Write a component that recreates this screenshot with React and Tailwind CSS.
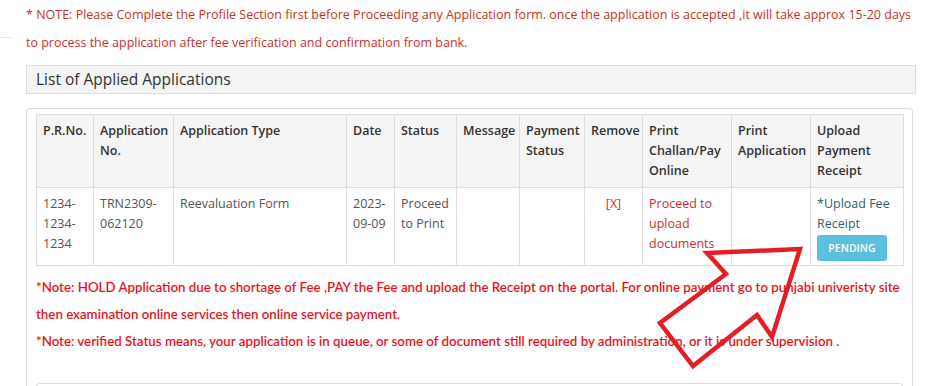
import React from "react";

const cols = [57, 80, 173, 48, 62, 63, 65, 58, 89, 79, 93];

export default function App() {
  const th = "border border-[#dddddd] px-[6px] py-[6px] align-top text-left font-semibold text-[#333333]";
  const td = "border border-[#dddddd] px-[6px] py-[6px] align-top text-left text-[#555555]";
  return (
    <div className="relative w-[926px] h-[386px] overflow-hidden bg-white" style={{ fontFamily: '"Open Sans", "Liberation Sans", sans-serif' }}>
      <div className="flex">
        <div className="w-[26px] shrink-0">
          <div className="mt-[37px] h-px w-[12px] bg-[#e8e8e8]" />
        </div>
        <div className="w-[890px] shrink-0">
          <p className="pt-[1px] text-[12.5px] leading-[28px] text-[#c9302c]">
            * NOTE: Please Complete the Profile Section first before Proceeding any Application form. once the application is accepted ,it will take approx 15-20 days to process the application after fee verification and confirmation from bank.
          </p>
          <div className="mt-[8px] h-[29px] border border-[#dddddd] bg-[#f5f5f5] pl-[9px] text-[15.5px] leading-[27px] text-[#333333]">
            List of Applied Applications
          </div>
          <div className="mt-[14px] w-[887px] rounded-t-[4px] border border-b-0 border-[#dddddd] pl-[9px] pt-[5px]">
            <table className="table-fixed border-collapse text-[12.5px] leading-[20px] w-[867px]">
              <colgroup>
                {cols.map((w, i) => (
                  <col key={i} style={{ width: w }} />
                ))}
              </colgroup>
              <thead>
                <tr className="bg-[#f5f5f5]">
                  <th className={th}>P.R.No.</th>
                  <th className={th}>Application No.</th>
                  <th className={th}>Application Type</th>
                  <th className={th}>Date</th>
                  <th className={th}>Status</th>
                  <th className={th}>Message</th>
                  <th className={th}>Payment Status</th>
                  <th className={th}>Remove</th>
                  <th className={th}>Print Challan/Pay Online</th>
                  <th className={th}>Print Application</th>
                  <th className={th}>Upload Payment Receipt</th>
                </tr>
              </thead>
              <tbody>
                <tr>
                  <td className={td}>1234-<br />1234-<br />1234</td>
                  <td className={td}>TRN2309-<br />062120</td>
                  <td className={td}>Reevaluation Form</td>
                  <td className={td}>2023-<br />09-09</td>
                  <td className={td}>Proceed to Print</td>
                  <td className={td}></td>
                  <td className={td}></td>
                  <td className={td + " !text-center"}><span className="text-[#c0392b]">[X]</span></td>
                  <td className={td}><span className="text-[#c9302c]">Proceed to upload documents</span></td>
                  <td className={td}></td>
                  <td className={td + " !pb-[4px]"}>
                    <div className="text-[#2f5f6e]">*Upload Fee Receipt</div>
                    <div className="mt-[1px] inline-block h-[26px] w-[70px] rounded-[3px] bg-[#5bc0de] text-center text-[10.5px] font-semibold leading-[26px] text-white">PENDING</div>
                  </td>
                </tr>
              </tbody>
            </table>
            <div className="mt-[8px] text-[13.3px] leading-[27px] font-semibold text-[#e8141c]" style={{ fontFamily: 'Lato, "Open Sans", sans-serif' }}>
              <p>*Note: HOLD Application due to shortage of Fee ,PAY the Fee and upload the Receipt on the portal. For online payment go to punjabi univeristy site then examination online services then online service payment.</p>
              <p>*Note: verified Status means, your application is in queue, or some of document still required by administration, or it is under supervision .</p>
            </div>
            <div className="mt-[28px] h-[40px] w-[867px] rounded-t-[4px] border border-b-0 border-[#dddddd]" />
          </div>
        </div>
      </div>
      <svg className="pointer-events-none absolute left-0 top-0" width="926" height="386" viewBox="0 0 926 386">
        <polygon
          points="800,249 707,253 726,274 660,323 693,366 757,315 772,337"
          fill="none"
          stroke="#e31e24"
          strokeWidth="4.5"
          strokeLinejoin="miter"
        />
      </svg>
    </div>
  );
}
